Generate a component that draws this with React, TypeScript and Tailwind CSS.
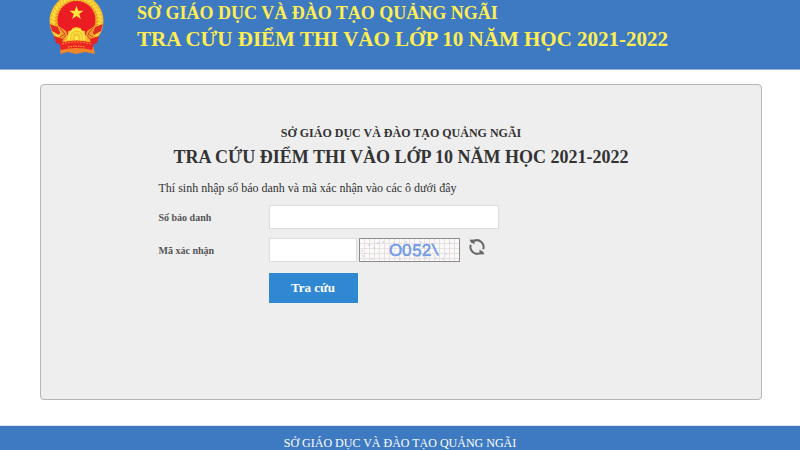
const department = "SỞ GIÁO DỤC VÀ ĐÀO TẠO QUẢNG NGÃI";
const pageTitle = "TRA CỨU ĐIỂM THI VÀO LỚP 10 NĂM HỌC 2021-2022";

// Grains of the wheat wreath around the emblem, in degrees clockwise from the top
const grainAngles = [
  -126, -117, -108, -99, -90, -81, -72, -63, -54, -45, -36, -27, -18, -9, 0, 9,
  18, 27, 36, 45, 54, 63, 72, 81, 90, 99, 108, 117, 126,
];

const captchaDots = [
  [2, 12], [3, 17], [9, 6], [14, 9], [18, 4], [23, 3], [12, 20], [34, 4],
  [40, 20], [46, 3], [61, 3], [66, 19], [76, 19], [86, 15], [90, 4], [83, 20],
];

function Emblem() {
  return (
    <svg
      viewBox="0 0 56 56"
      className="h-14 w-14 shrink-0"
      role="img"
      aria-label="Quốc huy Việt Nam"
    >
      <path d="M14 36L28 40L43 36L47 54L37 52L28 54L20 52L12 54Z" fill="#f0862c" />
      <circle cx="28.5" cy="21" r="27" fill="#f4bd2a" />
      {grainAngles.map((angle) => (
        <g key={angle} transform={`rotate(${angle} 28.5 21)`}>
          <ellipse cx="27.5" cy="-2.5" rx="1" ry="2.6" fill="#fbdf45" transform="rotate(35 27.5 -2.5)" />
          <ellipse cx="29.5" cy="1" rx="0.6" ry="2.2" fill="#e8921f" transform="rotate(-35 29.5 1)" />
        </g>
      ))}
      <circle cx="28.5" cy="20" r="19" fill="#ec1c24" />
      <path d="M2 24L10 27L13 31L11 35L4 31Z" fill="#e32a22" />
      <path d="M55 24L47 27L44 31L46 35L53 31Z" fill="#e32a22" />
      {/* Lower sheaves on both sides of the gear */}
      <path d="M9 25L18 31L20 37L15 42L8 39L13 35Z" fill="#f0a02c" />
      <path d="M48 25L39 31L37 37L42 42L49 39L44 35Z" fill="#f0a02c" />
      <path d="M12 28L17 34L12 37M15 39L18 35" fill="none" stroke="#dc3d20" strokeWidth="1" />
      <path d="M45 28L40 34L45 37M42 39L39 35" fill="none" stroke="#dc3d20" strokeWidth="1" />
      <path d="M6 36L15 39L14 45L8 43Z" fill="#e8231f" />
      <path d="M51 36L42 39L43 45L49 43Z" fill="#e8231f" />
      <path
        d="M28.5 5.5L30.2 10.7H35.6L31.2 13.9L32.9 19.1L28.5 15.9L24.1 19.1L25.8 13.9L21.4 10.7H26.8Z"
        fill="#ffe83b"
      />
      <path
        d="M18 41L18 36L20 35L20 31L23 30.5L24.5 28L28.5 27L32.5 28L34 30.5L37 31L37 35L39 36L39 41Z"
        fill="#f6c32a"
      />
      <path d="M21 40V37A7.5 7.5 0 0 1 36 37V40" fill="none" stroke="#ffee52" strokeWidth="1.6" />
      <path d="M24 40V37A4.5 4.5 0 0 1 33 37V40" fill="none" stroke="#fbe24b" strokeWidth="1.4" />
      <circle cx="28.5" cy="38" r="2" fill="#ffee52" />
      <path d="M11 43Q28.5 38 46 43L44 50Q28.5 46 13 50Z" fill="#ed2324" />
      <path
        d="M14 44Q28.5 40 43 44"
        fill="none"
        stroke="#f3942a"
        strokeWidth="1"
        strokeDasharray="2 1"
      />
      <path
        d="M20 47Q28.5 45.5 37 47"
        fill="none"
        stroke="#f3942a"
        strokeWidth="1.4"
        strokeDasharray="1.5 1"
      />
    </svg>
  );
}

function Captcha() {
  return (
    <svg
      viewBox="0 0 99 22"
      className="block h-6 w-[101px] border border-[#8c8c8c] bg-[#fbf9f8]"
      role="img"
      aria-label="Mã xác nhận"
    >
      <defs>
        <pattern id="captcha-grid" width="5" height="5" patternUnits="userSpaceOnUse">
          <path d="M4.5 0V5M0 4.5H5" stroke="#e6e0e0" strokeWidth="1" fill="none" />
        </pattern>
      </defs>
      <rect width="99" height="22" fill="url(#captcha-grid)" />
      {captchaDots.map(([x, y]) => (
        <circle key={`${x}-${y}`} cx={x} cy={y} r="0.8" fill="#b5c3f2" />
      ))}
      <text
        x="29 42 52 62 74"
        y="17 17 17 17 17"
        rotate="0 0 2 -2 -12"
        fontSize="17"
        fill="#6f9bea"
        stroke="#6f9bea"
        strokeWidth="0.5"
        className="font-['Liberation_Sans',Arial,sans-serif]"
      >
        O052\
      </text>
    </svg>
  );
}

function RefreshIcon() {
  return (
    <svg viewBox="0 0 18 18" className="h-[18px] w-[18px]" aria-hidden="true">
      <path
        d="M6 2.8A6.8 6.8 0 0 1 15.2 11.2M12 15.2A6.8 6.8 0 0 1 2.8 6.8"
        fill="none"
        stroke="#686868"
        strokeWidth="2"
      />
      <path d="M1.5 1.8L6.5 1.5L6.5 6.5L4.8 5.2L3.2 4.8Z" fill="#686868" />
      <path d="M16.5 16.2L11.5 16.5L11.5 11.5L13.2 12.8L14.8 13.2Z" fill="#686868" />
    </svg>
  );
}

export default function App() {
  return (
    <div className="bg-white font-['Liberation_Serif','Times_New_Roman',serif] text-[#333]">
      {/* Header */}
      <header className="flex border-b border-[#8fb2e0] bg-[#3e7ac2] pb-[13px] pl-12 text-[#ffee52]">
        <Emblem />
        <div className="pl-[33px] font-bold">
          <p className="text-lg leading-[26px]">{department}</p>
          <p className="text-[21px] leading-[26px]">{pageTitle}</p>
        </div>
      </header>

      {/* Lookup form */}
      <main className="pt-3.5 pr-[38px] pb-[25px] pl-10">
        <section className="min-h-[316px] rounded border border-[#b5b5b5] bg-[#eee] pt-9">
          <div className="text-center font-bold">
            <h2 className="text-xs leading-6">{department}</h2>
            <h1 className="text-lg leading-6">{pageTitle}</h1>
          </div>

          <form
            className="mx-auto max-w-[485px] pt-[7px]"
            onSubmit={(e) => e.preventDefault()}
          >
            <p className="text-xs leading-6">
              Thí sinh nhập số báo danh và mã xác nhận vào các ô dưới đây
            </p>

            <div className="mt-[5px] flex items-center">
              <label htmlFor="candidate" className="w-[110px] text-[10px] font-bold text-[#555]">
                Số báo danh
              </label>
              <input
                id="candidate"
                type="text"
                className="h-6 w-[230px] border border-[#ddd] bg-white px-1.5 text-xs outline-none"
              />
            </div>

            <div className="mt-[9px] flex items-center">
              <label htmlFor="captcha" className="w-[110px] text-[10px] font-bold text-[#555]">
                Mã xác nhận
              </label>
              <input
                id="captcha"
                type="text"
                className="mr-0.5 h-6 w-[88px] border border-[#ddd] bg-white px-1.5 text-xs outline-none"
              />
              <Captcha />
              <button type="button" aria-label="Đổi mã xác nhận" className="ml-2 self-start">
                <RefreshIcon />
              </button>
            </div>

            <button
              type="submit"
              className="mt-[11px] ml-[110px] h-[30px] w-[89px] bg-[#3088d2] text-[13px] font-bold text-white"
            >
              Tra cứu
            </button>
          </form>
        </section>
      </main>

      {/* Footer */}
      <footer className="border-t border-[#dde3ea] bg-[#3e7ac2] pt-[9px] text-center text-xs text-white">
        {department}
      </footer>
    </div>
  );
}
